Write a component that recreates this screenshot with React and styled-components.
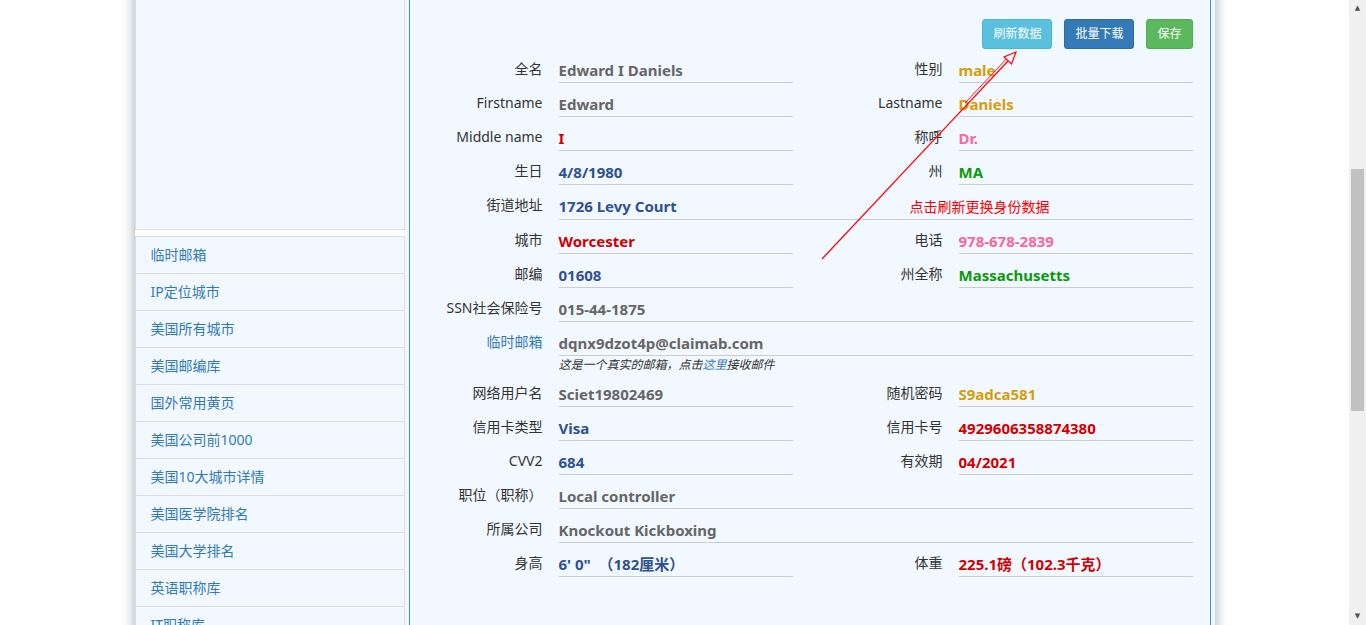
import React, { useLayoutEffect } from 'react';
import styled, { createGlobalStyle } from 'styled-components';

const GRAY = '#666';
const BLUE = '#2f5091';
const RED = '#d10000';
const GOLD = '#d69e08';
const PINK = '#f7699a';
const GREEN = '#0b9a0b';

const menu = [
    '临时邮箱',
    'IP定位城市',
    '美国所有城市',
    '美国邮编库',
    '国外常用黄页',
    '美国公司前1000',
    '美国10大城市详情',
    '美国医学院排名',
    '美国大学排名',
    '英语职称库',
    'IT职称库',
];

const rows = [
    [{ l: '全名', v: 'Edward I Daniels', c: GRAY }, { l: '性别', v: 'male', c: GOLD }],
    [{ l: 'Firstname', v: 'Edward', c: GRAY }, { l: 'Lastname', v: 'Daniels', c: GOLD }],
    [{ l: 'Middle name', v: 'I', c: RED }, { l: '称呼', v: 'Dr.', c: PINK }],
    [{ l: '生日', v: '4/8/1980', c: BLUE }, { l: '州', v: 'MA', c: GREEN }],
    [{ l: '街道地址', v: '1726 Levy Court', c: BLUE, full: true, tip: '点击刷新更换身份数据' }],
    [{ l: '城市', v: 'Worcester', c: RED }, { l: '电话', v: '978-678-2839', c: PINK }],
    [{ l: '邮编', v: '01608', c: BLUE }, { l: '州全称', v: 'Massachusetts', c: GREEN }],
    [{ l: 'SSN社会保险号', v: '015-44-1875', c: GRAY, full: true }],
    [{ l: '临时邮箱', v: 'dqnx9dzot4p@claimab.com', c: GRAY, full: true, link: true, mail: true }],
    [{ l: '网络用户名', v: 'Sciet19802469', c: GRAY }, { l: '随机密码', v: 'S9adca581', c: GOLD }],
    [{ l: '信用卡类型', v: 'Visa', c: BLUE }, { l: '信用卡号', v: '4929606358874380', c: RED }],
    [{ l: 'CVV2', v: '684', c: BLUE }, { l: '有效期', v: '04/2021', c: RED }],
    [{ l: '职位（职称）', v: 'Local controller', c: GRAY, full: true }],
    [{ l: '所属公司', v: 'Knockout Kickboxing', c: GRAY, full: true }],
    [{ l: '身高', v: '6\' 0"  （182厘米）', c: BLUE }, { l: '体重', v: '225.1磅（102.3千克）', c: RED }],
];

function App() {
    // the reference shows the page scrolled part way down
    useLayoutEffect(() => {
        window.scrollTo(0, 392);
    }, []);

    return (
        <>
            <GlobalStyle />
            <Container>
                <Sidebar>
                    <AdBox />
                    <Menu>
                        {menu.map((m) => (
                            <MenuItem key={m}>{m}</MenuItem>
                        ))}
                    </Menu>
                </Sidebar>
                <Panel>
                    <Toolbar>
                        <Button $bg="#5bc0de" $border="#46b8da">刷新数据</Button>
                        <Button $bg="#337ab7" $border="#2e6da4">批量下载</Button>
                        <Button $bg="#5cb85c" $border="#4cae4c">保存</Button>
                    </Toolbar>
                    <Form>
                        {rows.flat().map((f) => (
                            <Field key={f.l} $full={f.full}>
                                <Label $link={f.link}>{f.l}</Label>
                                <div>
                                    <Value $color={f.c}>
                                        <span>{f.v}</span>
                                        {f.tip && <Tip>{f.tip}</Tip>}
                                    </Value>
                                    {f.mail && (
                                        <MailNote>
                                            这是一个真实的邮箱，点击<a href="#">这里</a>接收邮件
                                        </MailNote>
                                    )}
                                </div>
                            </Field>
                        ))}
                        <Arrow width="210" height="220" viewBox="0 0 210 220">
                            <line x1="7" y1="214" x2="193" y2="16" stroke="#f00" strokeWidth="1.2" />
                            <line x1="150" y1="58" x2="195" y2="10" stroke="#f00" strokeWidth="0.9" />
                            <polygon
                                points="201,7 196.5,19 189,12"
                                fill="#fff"
                                stroke="#f00"
                                strokeWidth="1.2"
                                strokeLinejoin="miter"
                            />
                        </Arrow>
                    </Form>
                </Panel>
            </Container>
            <ScrollTrack>
                <ScrollArrow>▲</ScrollArrow>
                <ScrollThumb />
                <ScrollArrow>▼</ScrollArrow>
            </ScrollTrack>
        </>
    );
}

export default App;

const GlobalStyle = createGlobalStyle`
    html, body {
        margin: 0;
        padding: 0;
        background: #fff;
        font-family: "Noto Sans", "Noto Sans CJK SC", sans-serif;
    }
    body {
        padding-right: 17px;
    }
    ::-webkit-scrollbar {
        width: 0;
    }
`

const Container = styled.div`
    width: 1080px;
    min-height: 1526px;
    margin: 0 auto;
    display: flex;
    align-items: stretch;
    background: #f2f8ff;
    box-shadow: 0 0 12px rgba(60, 100, 130, 0.55);
`

const Sidebar = styled.div`
    width: 270px;
    flex-shrink: 0;
    background: #fff;
`

const AdBox = styled.div`
    height: 622px;
    box-sizing: border-box;
    border: 1px solid #ddd;
    border-top: none;
    background: #f2f8ff;
    margin-bottom: 6px;
`

const Menu = styled.div`
    border: 1px solid #ddd;
    border-bottom: none;
    background: #f2f8ff;
`

const MenuItem = styled.div`
    height: 36px;
    line-height: 36px;
    padding-left: 15px;
    border-bottom: 1px solid #ddd;
    font-size: 14px;
    color: #337ab7;
`

const Panel = styled.div`
    width: 802px;
    box-sizing: border-box;
    margin: 0 4px;
    padding-top: 411px;
    border-left: 1px solid #3c8dde;
    border-right: 1px solid #3c8dde;
    background: #f2f8ff;
`

const Toolbar = styled.div`
    display: flex;
    justify-content: flex-end;
    gap: 12px;
    padding-right: 17px;
`

const Button = styled.button`
    font-family: "Noto Sans", "Noto Sans CJK SC", sans-serif;
    font-size: 12px;
    line-height: 18px;
    padding: 5px 10px;
    border-radius: 3px;
    border: 1px solid ${(p) => p.$border};
    background: ${(p) => p.$bg};
    color: #fff;
    cursor: pointer;
`

const Form = styled.div`
    position: relative;
    display: grid;
    grid-template-columns: 400px 400px;
`

const Field = styled.div`
    display: grid;
    grid-template-columns: 133px ${(p) => (p.$full ? '634px' : '234px')};
    column-gap: 16px;
    grid-column: ${(p) => (p.$full ? '1 / -1' : 'auto')};
`

const Label = styled.div`
    text-align: right;
    padding-top: 11px;
    line-height: 18px;
    font-size: 14px;
    color: ${(p) => (p.$link ? '#337ab7' : '#333')};
    white-space: nowrap;
`

const Value = styled.div`
    display: flex;
    align-items: baseline;
    padding: 11px 0 2px;
    line-height: 20px;
    border-bottom: 1px solid #ccc;
    font-size: 15px;
    font-weight: bold;
    color: ${(p) => p.$color};
    white-space: pre;
`

const Tip = styled.span`
    margin-left: auto;
    margin-right: 143px;
    font-size: 14px;
    font-weight: normal;
    color: #f00;
`

const MailNote = styled.div`
    font-size: 12px;
    line-height: 17px;
    font-style: italic;
    color: #333;

    a {
        color: #337ab7;
        text-decoration: none;
    }
`

const Arrow = styled.svg`
    position: absolute;
    left: 405px;
    top: -4px;
    pointer-events: none;
`

const ScrollTrack = styled.div`
    position: fixed;
    top: 0;
    right: 0;
    width: 17px;
    height: 100vh;
    display: flex;
    flex-direction: column;
    background: #f0f0f0;
`

const ScrollArrow = styled.div`
    height: 17px;
    line-height: 17px;
    text-align: center;
    font-size: 7px;
    color: #505050;
    font-family: "DejaVu Sans", sans-serif;
`

const ScrollThumb = styled.div`
    height: 242px;
    margin: 152px 2px auto;
    background: #c1c1c1;
`
